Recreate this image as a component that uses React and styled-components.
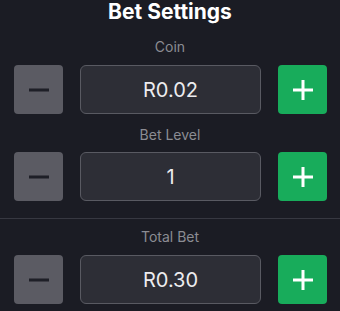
import React from 'react'
import styled, { createGlobalStyle } from 'styled-components'

const Global = createGlobalStyle`
  html, body {
    margin: 0;
    background: #1b1c24;
  }
  body {
    font-family: Inter, "Noto Sans", sans-serif;
  }
`

const Panel = styled.div`
  width: 340px;
  height: 311px;
  background: #1b1c24;
  display: flex;
  flex-direction: column;
  overflow: hidden;
`

const Title = styled.h1`
  margin: 0;
  font-size: 21px;
  line-height: 24px;
  font-weight: 700;
  color: #ffffff;
  text-align: center;
`

const Section = styled.div`
  display: flex;
  flex-direction: column;
  gap: ${p => p.$gap}px;
  margin-top: ${p => p.$top}px;
`

const Label = styled.div`
  font-size: 14px;
  line-height: 20px;
  color: #8b8c93;
  text-align: center;
`

const Row = styled.div`
  display: grid;
  grid-template-columns: 49px 1fr 49px;
  column-gap: 17px;
  padding: 0 13px 0 14px;
  height: 49px;
`

const StepButton = styled.button`
  border: none;
  padding: 0;
  border-radius: 4px;
  background: ${p => (p.$plus ? '#18ac5b' : '#5b5b63')};
  display: flex;
  align-items: center;
  justify-content: center;
`

const Value = styled.div`
  box-sizing: border-box;
  border: 1.5px solid #595a62;
  border-radius: 6px;
  background: #2d2e36;
  color: #ececef;
  font-size: 20px;
  display: flex;
  align-items: center;
  justify-content: center;
`

const Divider = styled.div`
  height: 1px;
  background: #373841;
  margin-top: 17px;
`

const MinusIcon = () => (
  <svg width='20' height='20' viewBox='0 0 20 20'>
    <rect x='0' y='8.5' width='20' height='3' fill='#1e1f27' />
  </svg>
)

const PlusIcon = () => (
  <svg width='20' height='20' viewBox='0 0 20 20'>
    <rect x='0' y='8.5' width='20' height='3' fill='#ffffff' />
    <rect x='8.5' y='0' width='3' height='20' fill='#ffffff' />
  </svg>
)

const Stepper = ({ label, value, top, gap }) => (
  <Section $top={top} $gap={gap}>
    <Label>{label}</Label>
    <Row>
      <StepButton><MinusIcon /></StepButton>
      <Value>{value}</Value>
      <StepButton $plus><PlusIcon /></StepButton>
    </Row>
  </Section>
)

export default function App () {
  return (
    <Panel>
      <Global />
      <Title>Bet Settings</Title>
      <Stepper label='Coin' value='R0.02' top={13} gap={8} />
      <Stepper label='Bet Level' value='1' top={11} gap={7} />
      <Divider />
      <Stepper label='Total Bet' value='R0.30' top={8} gap={8} />
    </Panel>
  )
}
